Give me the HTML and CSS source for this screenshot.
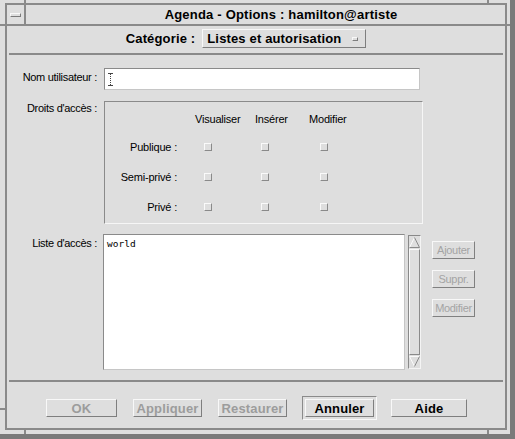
FILE: index.html
```html
<!DOCTYPE html>
<html lang="fr">
<head>
<meta charset="utf-8">
<title>Agenda - Options</title>
<link rel="stylesheet" href="styles.css">
</head>
<body>
<div class="window">
  <span class="tick tick-top-l"></span>
  <span class="tick tick-top-r"></span>
  <span class="tick tick-left-t"></span>
  <span class="tick tick-left-b"></span>
  <span class="tick tick-bot-l"></span>
  <span class="tick tick-bot-r"></span>
  <span class="tick tick-right-t"></span>
  <div class="frame">
    <div class="titlebar">
      <div class="menu-btn"><span class="menu-bar"></span></div>
      <div class="title">Agenda - Options : hamilton@artiste</div>
    </div>
    <div class="content">
      <div class="category">
        <span class="cat-label">Catégorie :</span>
        <div class="option-menu"><span>Listes et autorisation</span><span class="option-ind"></span></div>
      </div>
      <div class="sep"></div>

      <div class="row row-user">
        <div class="label label-user">Nom utilisateur :</div>
        <div class="textfield">
          <svg class="ibeam" width="5" height="13" viewBox="0 0 5 13">
            <path d="M0 0.5H5M0 12.5H5" stroke="#444" stroke-width="1"/>
            <path d="M2.5 1V12" stroke="#444" stroke-width="1" stroke-dasharray="1 1"/>
          </svg>
        </div>
      </div>

      <div class="row row-rights">
        <div class="label label-rights">Droits d'accès :</div>
        <div class="rights-box">
          <div class="rights-grid">
            <span></span>
            <span class="hdr h1">Visualiser</span>
            <span class="hdr h2">Insérer</span>
            <span class="hdr h3">Modifier</span>

            <span class="rlabel">Publique :</span>
            <span class="cb c1"></span><span class="cb c2"></span><span class="cb c3"></span>

            <span class="rlabel">Semi-privé :</span>
            <span class="cb c1"></span><span class="cb c2"></span><span class="cb c3"></span>

            <span class="rlabel">Privé :</span>
            <span class="cb c1"></span><span class="cb c2"></span><span class="cb c3"></span>
          </div>
        </div>
      </div>

      <div class="row row-list">
        <div class="label label-list">Liste d'accès :</div>
        <div class="listbox"><div class="list-item">world</div></div>
        <div class="scrollbar">
          <svg class="arrow" width="11" height="11" viewBox="0 0 11 11">
            <path d="M0.5 10.5L5.5 0.5" stroke="#fafafa" fill="none"/>
            <path d="M5.5 0.5L10.5 10.5H0.5" stroke="#8a8a8a" fill="none"/>
          </svg>
          <div class="slider"></div>
          <svg class="arrow" width="11" height="11" viewBox="0 0 11 11">
            <path d="M0.5 0.5H10.5M0.5 0.5L5.5 10.5" stroke="#fafafa" fill="none"/>
            <path d="M5.5 10.5L10.5 0.5" stroke="#8a8a8a" fill="none"/>
          </svg>
        </div>
        <div class="side-buttons">
          <button class="sbtn">Ajouter</button>
          <button class="sbtn">Suppr.</button>
          <button class="sbtn">Modifier</button>
        </div>
      </div>

      <div class="sep sep-bottom"></div>

      <div class="actions">
        <button class="btn btn-ok disabled">OK</button>
        <button class="btn disabled">Appliquer</button>
        <button class="btn disabled">Restaurer</button>
        <div class="default-frame"><button class="btn">Annuler</button></div>
        <button class="btn btn-help">Aide</button>
      </div>
    </div>
  </div>
</div>
</body>
</html>
```

FILE: styles.css
```css
html, body {
  margin: 0;
  padding: 0;
  background: #dedede;
}
body {
  width: 515px;
  height: 439px;
  overflow: hidden;
  font-family: "Liberation Sans", Arial, sans-serif;
  color: #000;
}
.window {
  position: relative;
  box-sizing: border-box;
  width: 515px;
  height: 439px;
  padding: 3px 3px 4px 5px;
  border-right: 5px solid #7a7a7a;
  border-bottom: 5px solid #7a7a7a;
}
/* resize-handle marks of the window frame (decoration over the frame) */
.tick {
  position: absolute;
  background: #8a8a8a;
}
.tick-top-l { left: 24px; top: 0; width: 2px; height: 4px; }
.tick-top-r { left: 487px; top: 0; width: 2px; height: 4px; }
.tick-left-t { left: 0; top: 24px; width: 6px; height: 2px; }
.tick-left-b { left: 0; top: 408px; width: 6px; height: 2px; }
.tick-bot-l { left: 24px; top: 429px; width: 2px; height: 5px; }
.tick-bot-r { left: 487px; top: 429px; width: 2px; height: 5px; }
.tick-right-t { left: 506px; top: 24px; width: 4px; height: 2px; }
.frame {
  box-sizing: border-box;
  height: 100%;
  border: 2px solid #8a8a8a;
  display: flex;
  flex-direction: column;
}
.titlebar {
  display: flex;
  height: 19px;
  border-bottom: 2px solid #8a8a8a;
}
.menu-btn {
  width: 17px;
  border-right: 2px solid #8a8a8a;
  display: flex;
  align-items: center;
  justify-content: center;
}
.menu-bar {
  width: 9px;
  height: 2px;
  border: 1px solid;
  border-color: #f8f8f8 #7a7a7a #7a7a7a #f8f8f8;
}
.title {
  flex: 1;
  text-align: center;
  font-weight: bold;
  font-size: 13px;
  letter-spacing: 0.2px;
  line-height: 19px;
  padding-left: 31px;
}
.content {
  flex: 1;
  display: flex;
  flex-direction: column;
}
.category {
  display: flex;
  justify-content: center;
  align-items: center;
  gap: 7px;
  margin-top: 3px;
  height: 19px;
  padding-right: 20px;
  font-weight: bold;
  font-size: 13px;
  letter-spacing: 0.15px;
}
.option-menu {
  box-sizing: border-box;
  width: 164px;
  height: 19px;
  display: flex;
  align-items: center;
  justify-content: space-between;
  padding: 0 7px 0 4px;
  border: 1px solid;
  border-color: #f8f8f8 #7e7e7e #7e7e7e #f8f8f8;
}
.option-ind {
  width: 4px;
  height: 2px;
  border: 1px solid;
  border-color: #f8f8f8 #7e7e7e #7e7e7e #f8f8f8;
}
.sep {
  border-top: 2px solid #8a8a8a;
  margin: 5px 2px 0;
}
.row {
  display: flex;
  align-items: flex-start;
}
.label {
  width: 90px;
  margin-right: 7px;
  text-align: right;
  font-size: 11px;
  letter-spacing: -0.3px;
  line-height: 14px;
  white-space: nowrap;
}
.row-user {
  margin-top: 13px;
}
.label-user {
  padding-top: 2px;
}
.textfield {
  box-sizing: border-box;
  width: 316px;
  height: 22px;
  background: #fff;
  border: 1px solid;
  border-color: #8a8a8a #c6c6c6 #c6c6c6 #8a8a8a;
  display: flex;
  align-items: center;
  padding-left: 3px;
}
.ibeam {
  display: block;
}
.row-rights {
  margin-top: 11px;
}
.rights-box {
  box-sizing: border-box;
  width: 319px;
  height: 123px;
  border: 1px solid;
  border-color: #8a8a8a #f6f6f6 #f6f6f6 #8a8a8a;
}
.rights-grid {
  display: grid;
  grid-template-columns: 76px 74px 54px 60px;
  grid-template-rows: 26px 30px 30px 30px;
  align-items: center;
  padding-top: 4px;
  font-size: 11px;
  letter-spacing: -0.2px;
}
.rlabel {
  text-align: right;
  padding-right: 4px;
  white-space: nowrap;
}
.hdr {
  white-space: nowrap;
}
.h1 { margin-left: 14px; }
.h2 { margin-left: 0; }
.h3 { margin-left: 0; }
.cb {
  box-sizing: border-box;
  width: 8px;
  height: 8px;
  border: 1px solid;
  border-color: #fafafa #8a8a8a #8a8a8a #fafafa;
}
.c1 { margin-left: 23px; }
.c2 { margin-left: 6px; }
.c3 { margin-left: 11px; }
.row-list {
  margin-top: 10px;
}
.label-list {
  padding-top: 2px;
  margin-right: 6px;
}
.listbox {
  box-sizing: border-box;
  width: 302px;
  height: 136px;
  background: #fff;
  border: 1px solid;
  border-color: #8a8a8a #c6c6c6 #c6c6c6 #8a8a8a;
  padding: 2px 3px;
}
.list-item {
  font-family: "DejaVu Sans Mono", "Liberation Mono", monospace;
  font-size: 9.5px;
  line-height: 13px;
}
.scrollbar {
  box-sizing: border-box;
  width: 13px;
  height: 134px;
  margin: 1px 0 0 3px;
  border: 1px solid;
  border-color: #8a8a8a #f4f4f4 #f4f4f4 #8a8a8a;
  display: flex;
  flex-direction: column;
  align-items: center;
}
.arrow {
  display: block;
  margin: 1px 0;
}
.slider {
  box-sizing: border-box;
  flex: 1;
  width: 11px;
  border: 1px solid;
  border-color: #fafafa #8a8a8a #8a8a8a #fafafa;
}
.side-buttons {
  display: flex;
  flex-direction: column;
  gap: 11px;
  margin: 7px 0 0 11px;
}
.sbtn {
  box-sizing: border-box;
  width: 43px;
  height: 18px;
  padding: 0;
  background: #dedede;
  border: 1px solid;
  border-color: #f8f8f8 #808080 #808080 #f8f8f8;
  font-family: "Liberation Sans", Arial, sans-serif;
  font-size: 11px;
  letter-spacing: -0.3px;
  color: #a4a4a4;
}
.sep-bottom {
  margin-top: 10px;
}
.actions {
  display: flex;
  align-items: center;
  gap: 16px;
  height: 24px;
  margin-top: 14px;
  padding-left: 39px;
}
.btn {
  box-sizing: border-box;
  width: 69px;
  height: 18px;
  padding: 0;
  background: #dedede;
  border: 1px solid;
  border-color: #f8f8f8 #7e7e7e #7e7e7e #f8f8f8;
  font-family: "Liberation Sans", Arial, sans-serif;
  font-weight: bold;
  font-size: 13px;
  letter-spacing: 0.15px;
  color: #000;
}
.btn.disabled {
  color: #9c9c9c;
}
.btn-ok {
  width: 71px;
}
.btn-help {
  width: 76px;
}
.default-frame {
  padding: 2px;
  border: 1px solid;
  border-color: #8a8a8a #f8f8f8 #f8f8f8 #8a8a8a;
  margin: 0 -2px 0 -1px;
  display: flex;
}
```
